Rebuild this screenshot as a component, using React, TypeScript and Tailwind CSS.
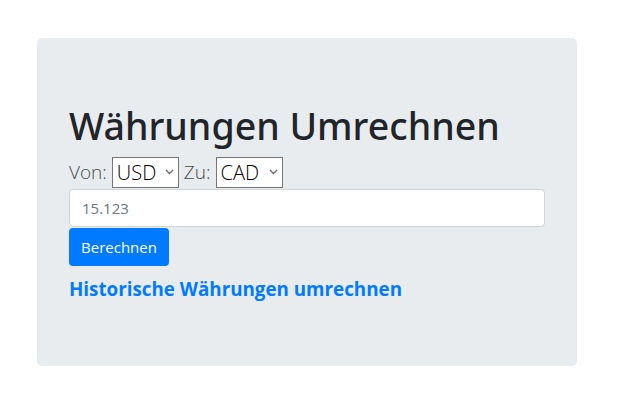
import React from "react";

function Chevron() {
  return (
    <svg width="9" height="6" viewBox="0 0 9 6" fill="none" stroke="#6b6b6b" strokeWidth="1.3" className="absolute right-[5px] top-[12px] pointer-events-none">
      <path d="M1 1l3.5 3.5L8 1" />
    </svg>
  );
}

function CurrencySelect({ value, width }: { value: string; width: string }) {
  return (
    <div className={`relative inline-block ${width}`}>
      <div className="h-[31px] border border-[#767676] bg-white pl-[4px] text-[20px] leading-[29px] text-black">
        {value}
      </div>
      <Chevron />
    </div>
  );
}

export default function App() {
  return (
    <div className="min-h-[418px] bg-white pt-[38px] pl-[37px]" style={{ fontFamily: '"Open Sans", "Noto Sans", Arial, sans-serif' }}>
      <div className="w-[540px] h-[328px] rounded-[5px] bg-[#e9ecef] px-[32px] pt-[64px]">
        {/* Heading */}
        <h1 className="font-['Noto_Sans',sans-serif] text-[37.5px] leading-[48px] font-medium text-[#212529]">
          Währungen Umrechnen
        </h1>

        {/* Currency pickers */}
        <div className="mt-[7px] flex items-center gap-[5px] text-[19px] text-[#45494d] font-light">
          <span>Von:</span>
          <CurrencySelect value="USD" width="w-[67px]" />
          <span>Zu:</span>
          <CurrencySelect value="CAD" width="w-[67px]" />
        </div>

        {/* Amount */}
        <div className="mt-[1px] h-[38px] w-[476px] rounded-[4px] border border-[#ced4da] bg-white px-[12px] text-[15px] leading-[36px] text-[#6c757d]">
          15.123
        </div>

        <button className="mt-px h-[38px] w-[100px] rounded-[4px] bg-[#007bff] text-[15px] text-white">
          Berechnen
        </button>

        <div className="mt-[11px]">
          <a className="text-[18.8px] font-bold leading-[24px] text-[#007bff]">Historische Währungen umrechnen</a>
        </div>
      </div>
    </div>
  );
}
